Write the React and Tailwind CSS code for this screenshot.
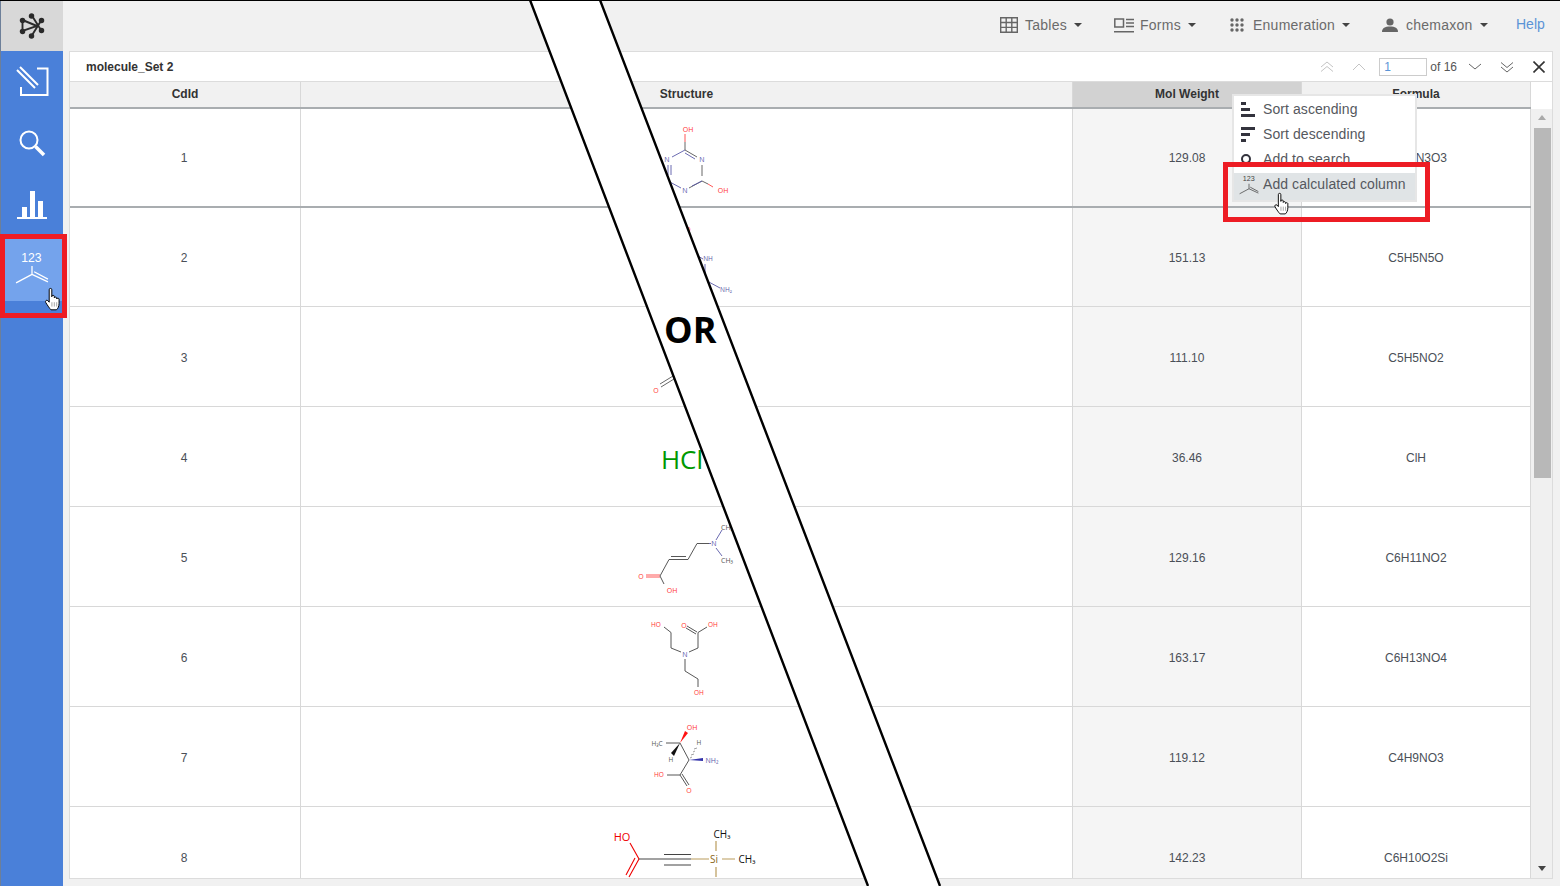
import React from "react";

const F = { fontFamily: '"Liberation Sans", Arial, sans-serif' };

function Hand({ className }) {
  return (
    <svg viewBox="0 0 16 23" className={className}>
      <path d="M4.5 2.500a1.200 1.200 0 0 1 2.400 0V9V8.500a1.200 1.200 0 0 1 2.300 0V10a1.200 1.200 0 0 1 2.200 0v1a1.200 1.200 0 0 1 2.200 0v4c0 3-1.200 5-2.400 6H6.200C5 20 3 17 1.300 14.200C.6 13 2 11.500 3.200 12.500L4.500 14Z" fill="#fff" stroke="#000" strokeWidth=".9" strokeLinejoin="round" />
      <path d="M7 14v4M9.200 14v4M11.400 14v4" stroke="#777" strokeWidth=".6" />
    </svg>
  );
}

function Caret() {
  return <span className="inline-block w-0 h-0 ml-[7px] border-x-[4px] border-x-transparent border-t-[4px] border-t-[#444]" />;
}

function NavItem({ icon, label, w }) {
  return (
    <div className={`flex items-center ${w}`}>
      {icon}
      <span className="text-[14px] tracking-[0.25px] text-[#6b6b6b]">{label}</span>
      <Caret />
    </div>
  );
}

function Y123({ size = "main" }) {
  return (
    <svg viewBox="0 0 32 32" className={size === "main" ? "w-[34px] h-[34px] mt-[2px]" : "w-[20px] h-[20px]"} fill="none" stroke="currentColor">
      <text x="15.500" y="10" textAnchor="middle" fontSize="11.500" fill="currentColor" stroke="none" style={F}>123</text>
      <path d="M16 14v8M16 22L1 30M16 22l15 7M18 19.500l13 7" strokeWidth="1.200" />
    </svg>
  );
}

function Mol({ top, h, children }) {
  return (
    <svg viewBox={`606 ${top} 161 ${h}`} className="w-[161px] block" style={{ height: h }} fontFamily="Open Sans, sans-serif">
      {children}
    </svg>
  );
}

const T = ({ x, y, c = "#f33", s = 7, children, a = "middle" }) => (
  <text x={x} y={y + s * 0.36} fontSize={s} fill={c} textAnchor={a}>{children}</text>
);
const B = ({ d, c = "#444", w = 0.9 }) => <path d={d} stroke={c} strokeWidth={w} fill="none" />;
const BL = "#5a5aa8";
const RD = "#f44";

const molecules = [
  (
    <>
      <B d="M685 142V134" c={RD} />
      <B d="M685 150V142M685 150L697 157M702 176V165M702 181L689 188M702 181L708 184" c="#555" />
      <B d="M708 184L713 187" c={RD} />
      <B d="M685 153L695 159M702 181L692 186" c={BL} />
      <B d="M672 157L685 150M668 165V175M671 165V175M668 181L681 188" c={BL} />
      <T x={688} y={129}>OH</T>
      <T x={702} y={159} c={BL}>N</T>
      <T x={667} y={159} c={BL}>N</T>
      <T x={685} y={190} c={BL}>N</T>
      <T x={723} y={190}>OH</T>
    </>
  ),
  (
    <>
      <T x={688} y={229}>O</T>
      <B d="M698 256L703 259M705 264V281M707 281L720 288" c={BL} />
      <T x={708} y={259} c={BL} s={6.5}>NH</T>
      <T x={726} y={290} c={BL} s={6.5}>NH₂</T>
    </>
  ),
  (
    <>
      <T x={656} y={390}>O</T>
      <B d="M661 387L674 379M660 384L673 376" c="#555" />
    </>
  ),
  <T x={682} y={460} c="#090" s={26}>HCl</T>,
  (
    <>
      <T x={641} y={576}>O</T>
      <T x={672} y={590}>OH</T>
      <B d="M646 575H660M646 577H660" c={RD} />
      <B d="M660 576L669 559.500H688L697 543.500H709M671 556.500H686M660 576L664 584" />
      <B d="M709 543.500H711M716 540L722 530M716 548L722 556" c={BL} />
      <T x={714} y={543} c={BL}>N</T>
      <T x={727} y={527} c="#555">CH₃</T>
      <T x={727} y={560} c="#555">CH₃</T>
    </>
  ),
  (
    <>
      <T x={656} y={625} s={6.5}>HO</T>
      <T x={684} y={625}>O</T>
      <T x={713} y={625} s={6.5}>OH</T>
      <T x={685} y={654} c={BL}>N</T>
      <T x={699} y={693} s={6.5}>OH</T>
      <B d="M664 627L671 632.500V648L681 652M689 652L698 648V632.500L707 627M687 626L697 632M686 628L696 634" />
      <B d="M685 659V671L698 679V687" />
    </>
  ),
  (
    <>
      <T x={692} y={727}>OH</T>
      <T x={657} y={744} c="#555" s={6.5}>H₃C</T>
      <T x={671} y={760} c="#555" s={6.5}>H</T>
      <T x={699} y={743} c="#555" s={6.5}>H</T>
      <T x={712} y={760} c={BL}>NH₂</T>
      <T x={659} y={775} s={6.5}>HO</T>
      <T x={689} y={790}>O</T>
      <B d="M666 743H680L689 760L680 775M680 775H667M680 775L687 786M682 774L689 785" />
      <path d="M680 743L685 731L688 733Z" fill="#f11" />
      <path d="M680 743L671 753L674 756Z" fill="#111" />
      <path d="M689 760L703 758V761Z" fill="#33a" />
      <B d="M690 758L692 757M691 755L694 754M693 752L695 751M694 749L697 748" c="#777" w={0.7} />
    </>
  ),
  (
    <>
      <T x={622} y={837} c="#e00" s={11}>HO</T>
      <T x={714} y={859} c="#8a6516" s={10}>Si</T>
      <T x={722} y={834} c="#111" s={10}>CH₃</T>
      <T x={747} y={859} c="#111" s={10}>CH₃</T>
      <B d="M630 843L639 859" c="#e00" w={1.100} />
      <B d="M639 859L629 877M635 858L626 875" c="#e00" w={1.100} />
      <B d="M639 859H664L691 859M664 854.500H691M664 865H691" w={1.100} />
      <B d="M691 859H709M716 841V851M716 867V877M722 859H735" c="#b99c5c" w={1.200} />
    </>
  ),
];

const rows = [
  { id: 1, mw: "129.08", f: "C3H3N3O3", top: 109, h: 99, strong: true },
  { id: 2, mw: "151.13", f: "C5H5N5O", top: 208, h: 99 },
  { id: 3, mw: "111.10", f: "C5H5NO2", top: 307, h: 100 },
  { id: 4, mw: "36.46", f: "ClH", top: 407, h: 100 },
  { id: 5, mw: "129.16", f: "C6H11NO2", top: 507, h: 100 },
  { id: 6, mw: "163.17", f: "C6H13NO4", top: 607, h: 100 },
  { id: 7, mw: "119.12", f: "C4H9NO3", top: 707, h: 100 },
  { id: 8, mw: "142.23", f: "C6H10O2Si", top: 807, h: 100 },
];

function Row({ r, i }) {
  const cell = "flex items-center justify-center border-r border-r-[#d8d8d8]";
  const nudge = r.strong ? "" : "pt-[2px]";
  return (
    <div
      className={`grid grid-cols-[231px_772px_229px_229px] shrink-0 text-[12px] text-[#4a4f57] ${r.strong ? "border-b-2 border-b-[#a9adb0]" : "border-b border-b-[#d8d8d8]"}`}
      style={{ height: r.h }}
    >
      <div className={`${cell} ${nudge} pr-[2px]`}>{r.id}</div>
      <div className={cell}><Mol top={r.top} h={r.h - (r.strong ? 2 : 1)}>{molecules[i]}</Mol></div>
      <div className={`${cell} ${nudge} bg-[#f5f5f5]`}>{r.mw}</div>
      <div className={`${cell} ${nudge}`}>{r.f}</div>
    </div>
  );
}

function MenuItem({ icon, label, active }) {
  return (
    <div className={`flex items-center ${active ? "h-[27px] mt-[1px] pb-[4px] bg-[#e0e4e6]" : "h-[25px]"}`}>
      <div className="w-[29px] flex justify-center text-[#3a3a44]">{icon}</div>
      <span className="text-[14px] tracking-[0.08px] text-[#55585e]">{label}</span>
    </div>
  );
}

const Sort = ({ bars }) => (
  <svg width="15" height="15" viewBox="0 0 15 15" fill="#33333d">
    {bars.map((b, i) => <rect key={i} x="0" y={b[0]} width={b[1]} height="3" />)}
  </svg>
);

const HC = "flex items-center justify-center border-r border-r-[#d8d8d8] pb-[2px]";

export default function App() {
  return (
    <div className="relative w-[1560px] h-[886px] overflow-hidden bg-[#f1f1f1] border-t border-t-black flex" style={F}>
      <aside className="w-[63px] shrink-0 flex flex-col bg-[#4a80d9] border-l border-l-[#6d7f99]">
        <div className="h-[50px] bg-[#d8d8d8] flex items-center justify-center">
          <svg viewBox="0 0 26 26" className="w-[26px] h-[26px]" stroke="#2a2a2a" fill="#2a2a2a" strokeWidth="1.900">
            <path d="M3.500 7L18 13L3.500 18ZM12.500 2L22 17M22.500 7L12.500 23" fill="none" />
            <circle cx="12.500" cy="3" r="1.800" /><circle cx="3.500" cy="7.500" r="1.800" /><circle cx="22.500" cy="7.500" r="1.800" />
            <circle cx="3.500" cy="18.500" r="1.800" /><circle cx="22.500" cy="17.500" r="1.800" /><circle cx="12.500" cy="23" r="1.800" />
          </svg>
        </div>
        <div className="h-[63px] flex items-center justify-center pb-[3px]">
          <svg viewBox="0 0 34 34" className="w-[34px] h-[34px]" fill="none" stroke="#fff" strokeWidth="2">
            <path d="M2 6L20 24M5 3L23 21" />
            <path d="M22 4.500H32.500V31H6V23" />
          </svg>
        </div>
        <div className="h-[63px] flex items-center justify-center pb-[6px]">
          <svg viewBox="0 0 30 30" className="w-[30px] h-[30px]" fill="none" stroke="#fff">
            <circle cx="12" cy="12" r="8.500" strokeWidth="2" />
            <path d="M18.500 18.500L27 27" strokeWidth="3.500" />
          </svg>
        </div>
        <div className="h-[63px] flex items-center justify-center pb-[3px]">
          <svg viewBox="0 0 32 32" className="w-[32px] h-[32px]" fill="#fff">
            <rect x="1" y="26" width="30" height="2" />
            <rect x="6" y="16" width="5" height="10" /><rect x="14" y="0" width="5" height="26" /><rect x="22" y="10" width="5" height="16" />
          </svg>
        </div>
        <div className="h-[62px] bg-[#74a3ec] flex items-center justify-center text-white pb-[6px] mt-[-1px]"><Y123 /></div>
      </aside>
      <main className="flex-1 flex flex-col min-w-0">
        <header className="h-[50px] shrink-0 flex items-center pl-[937px] pb-[2px]">
          <NavItem w="w-[114px]" label="Tables" icon={
            <svg viewBox="0 0 18 16" className="w-[18px] h-[16px] mr-[7px]" fill="none" stroke="#666" strokeWidth="1.400"><path d="M.7.7H17.300V15.300H.7ZM.7 5.500H17.300M.7 10.400H17.300M6.200.7V15.300M11.800.7V15.300" /></svg>} />
          <NavItem w="w-[116px]" label="Forms" icon={
            <svg viewBox="0 0 20 15" className="w-[20px] h-[15px] mr-[6px]" fill="none" stroke="#666" strokeWidth="1.500"><path d="M.8 1H9.500V9H.8ZM0 13.700H20M12 1.500H20M12 5H20M12 8.500H20" /></svg>} />
          <NavItem w="w-[152px]" label="Enumeration" icon={
            <svg viewBox="0 0 14 14" className="w-[14px] h-[14px] mr-[9px]" fill="#666">
              {[2, 7, 12].flatMap((y) => [2, 7, 12].map((x) => <circle key={`${x}-${y}`} cx={x} cy={y} r="1.700" />))}
            </svg>} />
          <NavItem w="w-[134px]" label="chemaxon" icon={
            <svg viewBox="0 0 16 14" className="w-[16px] h-[14px] mr-[8px]" fill="#666"><circle cx="8" cy="4" r="3.600" /><path d="M0 14c0-4 3-5.500 8-5.500s8 1.500 8 5.500Z" /></svg>} />
          <span className="text-[14px] text-[#5b94d6] relative top-[-1px]">Help</span>
        </header>
        <section className="ml-[6px] mr-[7px] h-[828px] flex flex-col bg-white border border-[#dcdcdc] overflow-hidden">
          <div className="h-[30px] shrink-0 flex items-center border-b border-b-[#dcdcdc] pl-[16px] pr-[7px]">
            <span className="text-[12px] font-bold text-[#333]">molecule_Set 2</span>
            <div className="ml-auto flex items-center">
              <svg viewBox="0 0 14 12" className="w-[14px] h-[12px] mr-[18px]" fill="none" stroke="#c4c4c4"><path d="M1 6L7 1L13 6M1 10.500L7 5.500L13 10.500" /></svg>
              <svg viewBox="0 0 14 8" className="w-[14px] h-[8px] mr-[13px]" fill="none" stroke="#c4c4c4"><path d="M1 7L7 1L13 7" /></svg>
              <div className="w-[48px] h-[18px] border border-[#ccc] text-[12px] text-[#5b94d6] pl-[4px] leading-[16px]">1</div>
              <span className="text-[12px] text-[#555] ml-[3px] mr-[11px]">of 16</span>
              <svg viewBox="0 0 14 8" className="w-[14px] h-[8px] mr-[18px]" fill="none" stroke="#666"><path d="M1 1L7 6L13 1" /></svg>
              <svg viewBox="0 0 14 12" className="w-[14px] h-[12px] mr-[19px]" fill="none" stroke="#666"><path d="M1 1.500L7 6.500L13 1.500M1 6L7 11L13 6" /></svg>
              <svg viewBox="0 0 12 12" className="w-[12px] h-[12px]" fill="none" stroke="#333" strokeWidth="1.600"><path d="M.5.500L11.500 11.500M11.500.500L.5 11.500" /></svg>
            </div>
          </div>
          <div className="flex-1 flex min-h-0">
            <div className="w-[1461px] shrink-0 flex flex-col overflow-hidden">
              <div className="h-[27px] shrink-0 grid grid-cols-[231px_772px_229px_229px] text-[12px] font-bold text-[#333] bg-[#f1f1f1] border-b-2 border-b-[#a9adb0]">
                <div className={HC}>CdId</div>
                <div className={HC}>Structure</div>
                <div className={`${HC} bg-[#d2d2d2]`}>Mol Weight</div>
                <div className={HC}>Formula</div>
              </div>
              {rows.map((r, i) => <Row key={r.id} r={r} i={i} />)}
            </div>
            <div className="flex-1 flex flex-col">
              <div className="h-[27px] shrink-0 bg-white" />
              <div className="flex-1 bg-[#f0f0f0] flex flex-col items-center pl-[1px] pt-[6px] pb-[7px]">
                <span className="w-0 h-0 border-x-[4px] border-x-transparent border-b-[5px] border-b-[#aaa]" />
                <div className="w-[17px] h-[350px] mt-[8px] bg-[#b8b8b8]" />
                <span className="mt-auto w-0 h-0 border-x-[4px] border-x-transparent border-t-[5px] border-t-[#444]" />
              </div>
            </div>
          </div>
        </section>
      </main>

      {/* diagonal band laid over the page */}
      <svg className="absolute left-0 top-[-1px] w-[1560px] h-[886px] pointer-events-none" viewBox="0 0 1560 886">
        <polygon points="530,0 600,0 940,886 868,886" fill="#fff" />
        <path d="M530 0L868 886M600 0L940 886" stroke="#000" strokeWidth="2.400" fill="none" />
      </svg>
      <div className="absolute left-[664px] top-[304px] text-[36px] leading-[50px] font-bold text-black" style={{ fontFamily: '"Open Sans", sans-serif' }}>OR</div>

      {/* column menu */}
      <div className="absolute left-[1232px] top-[93px] w-[185px] h-[108px] bg-white border-2 border-[#e6e6e6] pt-[1px]">
        <MenuItem label="Sort ascending" icon={<Sort bars={[[0, 5], [6, 9], [12, 14]]} />} />
        <MenuItem label="Sort descending" icon={<Sort bars={[[0, 14], [6, 9], [12, 5]]} />} />
        <MenuItem label="Add to search" icon={
          <svg viewBox="0 0 14 14" className="w-[14px] h-[14px] ml-[-3px]" fill="none" stroke="#33333d" strokeWidth="2"><circle cx="6" cy="6" r="4" /><path d="M9 9L13 13" /></svg>} />
        <MenuItem active label="Add calculated column" icon={<span className="text-[#444]"><Y123 size="small" /></span>} />
      </div>

      {/* highlight boxes */}
      <div className="absolute left-[1223px] top-[161px] w-[207px] h-[60px] border-[5px] border-[#ed1c24]" />
      <div className="absolute left-0 top-[233px] w-[67px] h-[84px] border-[5px] border-[#ed1c24]" />
      <Hand className="absolute left-[44px] top-[286px] w-[18px] h-[25px]" />
      <Hand className="absolute left-[1273px] top-[191px] w-[18px] h-[24px]" />
    </div>
  );
}
